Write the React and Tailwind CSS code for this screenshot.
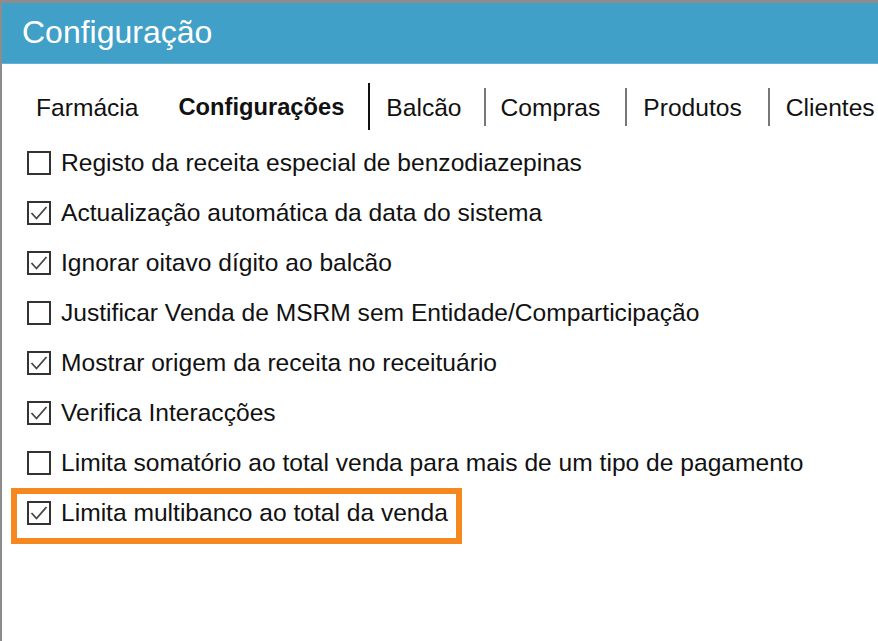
import React from 'react';

const options = [
    { label: 'Registo da receita especial de benzodiazepinas', checked: false },
    { label: 'Actualização automática da data do sistema', checked: true },
    { label: 'Ignorar oitavo dígito ao balcão', checked: true },
    { label: 'Justificar Venda de MSRM sem Entidade/Comparticipação', checked: false },
    { label: 'Mostrar origem da receita no receituário', checked: true },
    { label: 'Verifica Interacções', checked: true },
    { label: 'Limita somatório ao total venda para mais de um tipo de pagamento', checked: false },
    { label: 'Limita multibanco ao total da venda', checked: true, highlight: true },
];

const Checkbox = ({ checked }) => (
    <div className="w-[24px] h-[24px] border-2 border-[#333] bg-white flex items-center justify-center shrink-0">
        {checked && (
            <svg width="20" height="20" viewBox="0 0 20 20" fill="none">
                <path d="M2.5 10 L7.5 15.5 L17.5 4" stroke="#444" strokeWidth="1.8" />
            </svg>
        )}
    </div>
);

const OptionRow = ({ label, checked }) => (
    <div className="flex items-center gap-[10px]">
        <Checkbox checked={checked} />
        <span className="text-[24.6px] text-[#111] leading-none whitespace-nowrap">{label}</span>
    </div>
);

const Separator = ({ active }) => (
    <div className={active ? 'w-[2px] h-[47px] bg-[#111]' : 'w-[2px] h-[38px] bg-[#777]'} />
);

const App = () => {
    return (
        <div className="w-[878px] h-[641px] overflow-hidden bg-white border-l-[2px] border-t-[3px] border-[#8c8c8c] font-['Liberation_Sans',Arial,sans-serif]">
            {/* barra de título */}
            <div className="h-[61px] bg-[#41a0c8] border-b-[1px] border-[#63b3d8] flex items-center pl-[20px] pb-[2px]">
                <span className="text-[32px] text-white leading-none whitespace-nowrap">Configuração</span>
            </div>

            {/* separadores */}
            <div className="mt-[19px] h-[47px] flex items-center pl-[34px] text-[24.6px] text-[#111] whitespace-nowrap">
                <span className="mt-[3px]">Farmácia</span>
                <span className="mt-[3px] ml-[40px] font-bold text-[23.7px]">Configurações</span>
                <div className="ml-[24px]"><Separator active /></div>
                <span className="mt-[3px] ml-[16px]">Balcão</span>
                <div className="ml-[22px]"><Separator /></div>
                <span className="mt-[3px] ml-[15px]">Compras</span>
                <div className="ml-[25px]"><Separator /></div>
                <span className="mt-[3px] ml-[16px]">Produtos</span>
                <div className="ml-[26px]"><Separator /></div>
                <span className="mt-[3px] ml-[16px]">Clientes</span>
            </div>

            {/* opções */}
            <div className="mt-[8px] flex flex-col pl-[25px]">
                {options.map((opt) =>
                    opt.highlight ? (
                        <div key={opt.label} className="h-[50px] flex items-start">
                            <div className="-ml-[16px] h-[56px] border-[6px] border-[#f5891f] pl-[10px] pr-[8px] pb-[6px] flex items-center">
                                <OptionRow label={opt.label} checked={opt.checked} />
                            </div>
                        </div>
                    ) : (
                        <div key={opt.label} className="h-[50px] flex items-center">
                            <OptionRow label={opt.label} checked={opt.checked} />
                        </div>
                    )
                )}
            </div>
        </div>
    );
};

export default App;
